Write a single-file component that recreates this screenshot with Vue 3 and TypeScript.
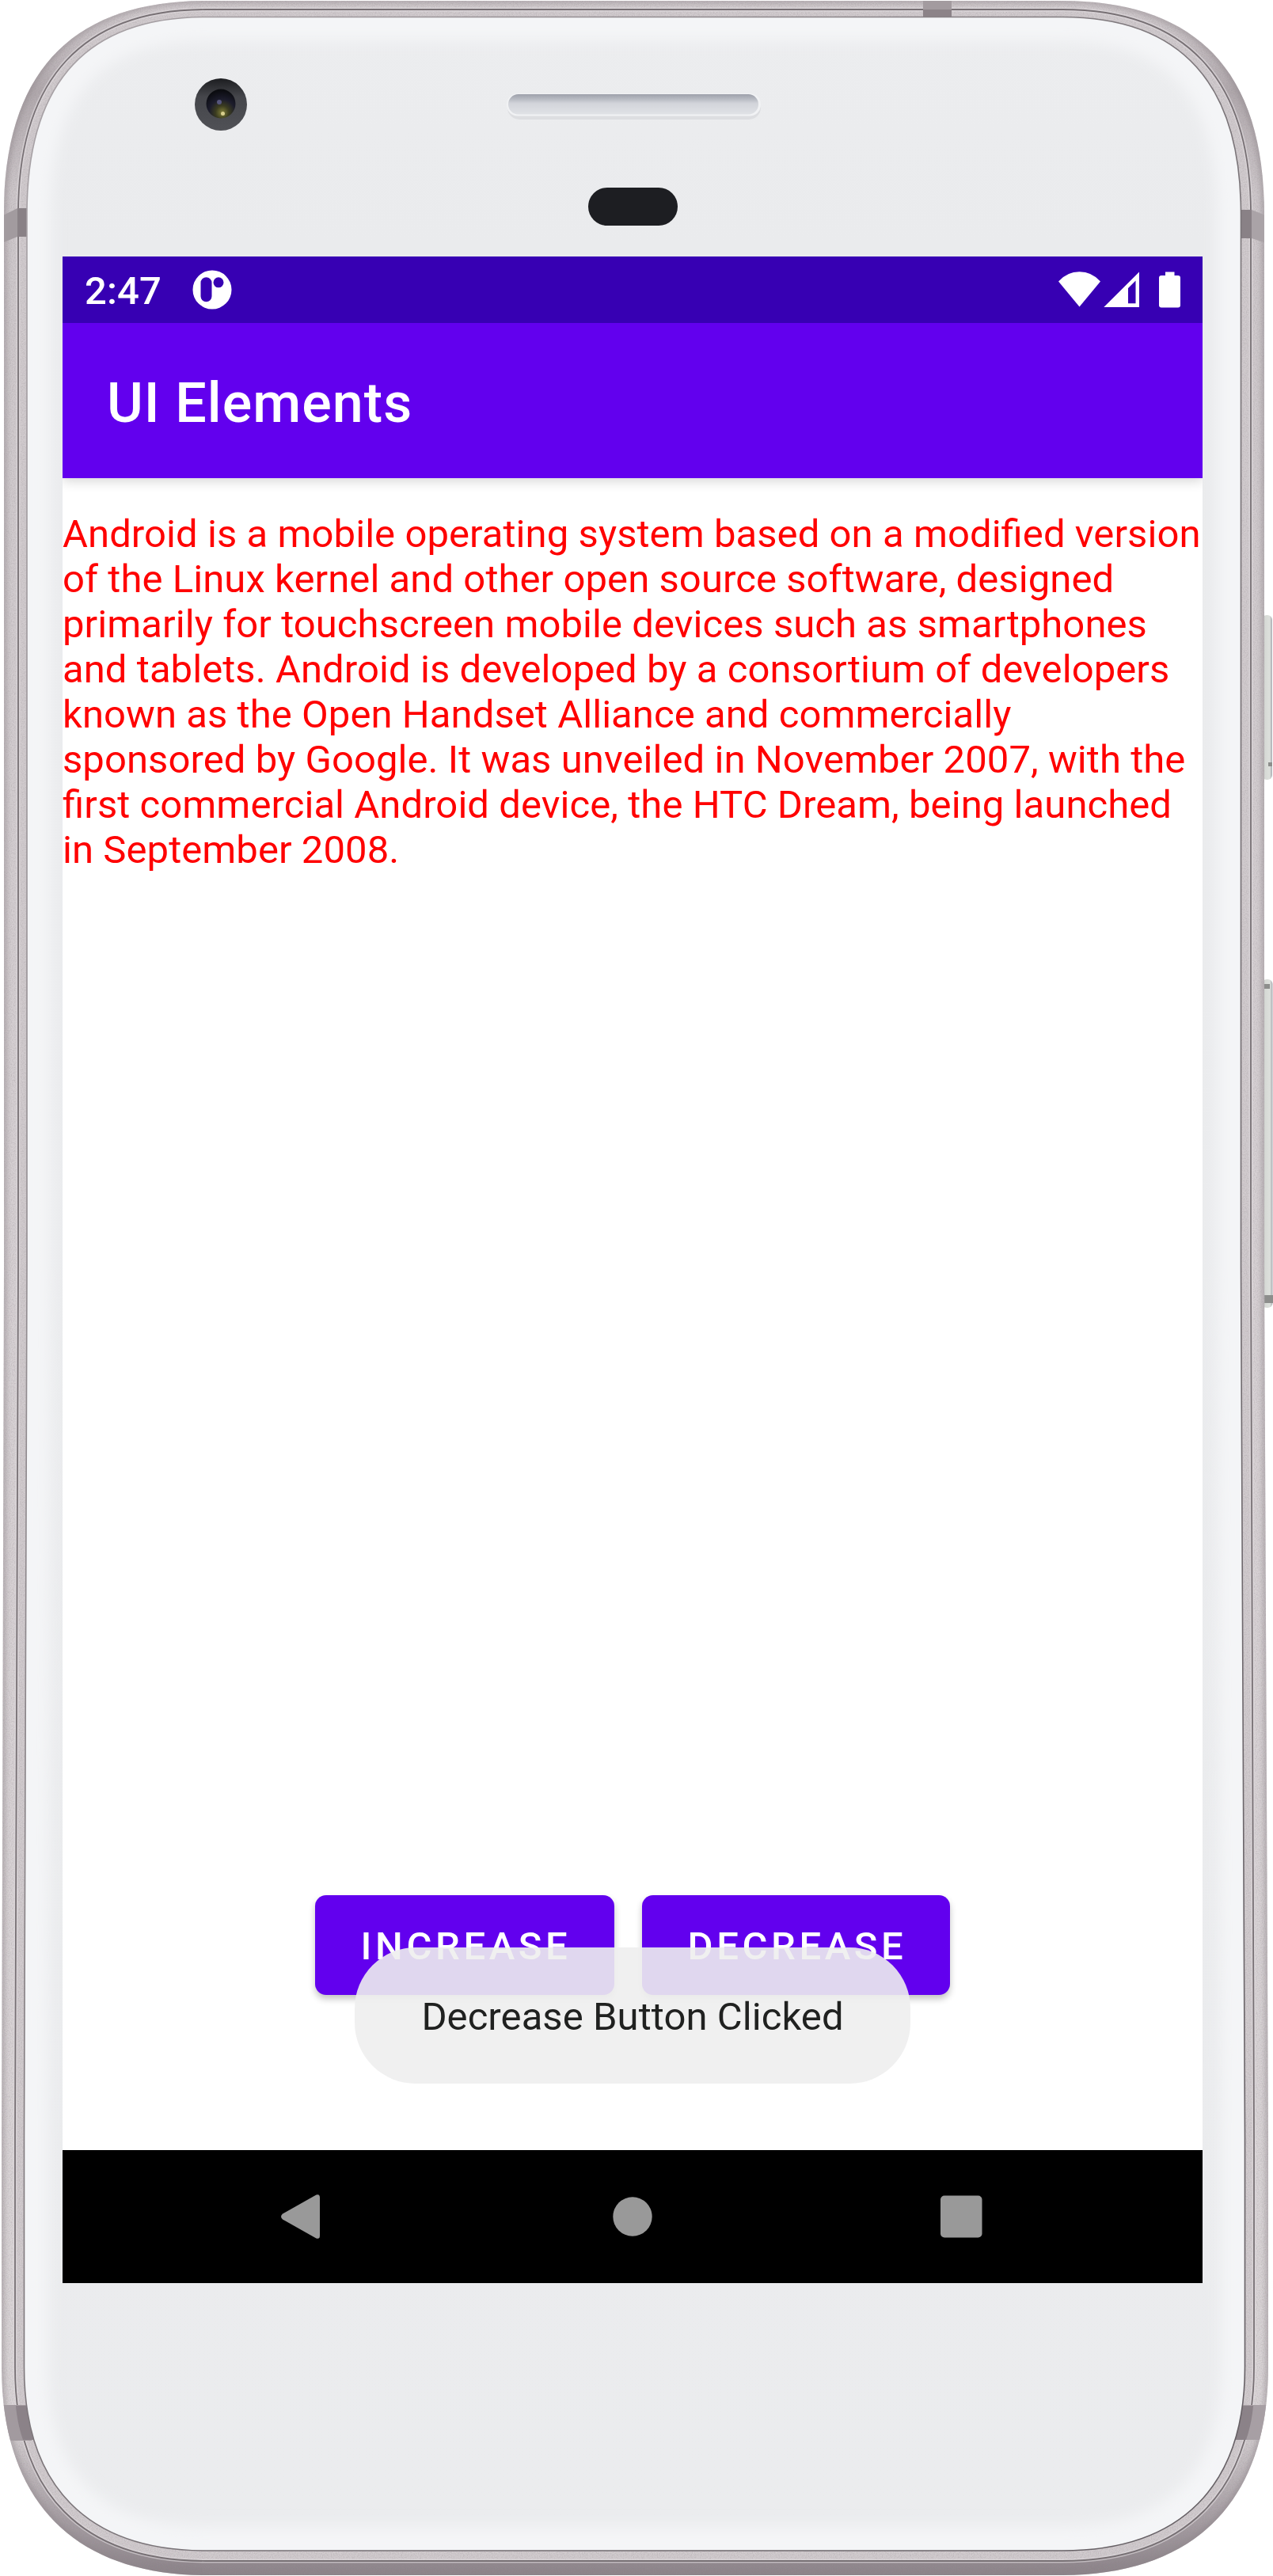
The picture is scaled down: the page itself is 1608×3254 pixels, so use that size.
<script setup lang="ts">
interface Action {
  label: string
  kind: string
}

const clock = '2:47'
const title = 'UI Elements'
const lines: string[] = [
  'Android is a mobile operating system based on a modified version',
  'of the Linux kernel and other open source software, designed',
  'primarily for touchscreen mobile devices such as smartphones',
  'and tablets. Android is developed by a consortium of developers',
  'known as the Open Handset Alliance and commercially',
  'sponsored by Google. It was unveiled in November 2007, with the',
  'first commercial Android device, the HTC Dream, being launched',
  'in September 2008.',
]
const actions: Action[] = [
  { label: 'INCREASE', kind: 'increase' },
  { label: 'DECREASE', kind: 'decrease' },
]
const toast = 'Decrease Button Clicked'

// Outlines of the metal rim, its seam and the glass face
const rim =
  'M5 270C5 84 98 1 260 1H1342C1505 1 1597 84 1597 270V1600L1602 2700V2990C1602 3160 1508 3253 1342 3253H260C95 3253 2 3160 2 2990V2700L5 1600Z'
const seam =
  'M23 270C23 98 106 12 260 12H1342C1496 12 1580 98 1580 270V1600L1584 2700V2990C1584 3150 1494 3235 1342 3235H260C104 3235 19 3150 19 2990V2700L23 1600Z'
const face =
  'M34 270C34 106 108 21.500 260 21.500H1342C1492 21.500 1567.500 106 1567.500 270V1600L1572.500 2700V2990C1572.500 3140 1492 3222 1342 3222H260C110 3222 30.500 3140 30.500 2990V2700L34 1600Z'
</script>

<template>
  <main class="phone">
    <svg class="body" viewBox="0 0 1608 3254" aria-hidden="true">
      <defs>
        <linearGradient id="metal" x1="0" y1="0" x2="0" y2="1">
          <stop offset="0" stop-color="#d6d0d3" />
          <stop offset="0.035" stop-color="#b1a9ad" />
          <stop offset="0.075" stop-color="#cec8cb" />
          <stop offset="0.5" stop-color="#d7d1d4" />
          <stop offset="0.94" stop-color="#dad5d7" />
          <stop offset="0.975" stop-color="#aaa2a7" />
          <stop offset="1" stop-color="#8b8288" />
        </linearGradient>
        <linearGradient id="glass" x1="0" y1="0" x2="0" y2="1">
          <stop offset="0" stop-color="#ecedef" />
          <stop offset="0.09" stop-color="#eaebed" />
          <stop offset="1" stop-color="#ebecee" />
        </linearGradient>
        <linearGradient id="faceEdge" x1="0" y1="0" x2="1" y2="1">
          <stop offset="0" stop-color="#a9a3a7" />
          <stop offset="0.5" stop-color="#7b7579" />
          <stop offset="1" stop-color="#655f64" />
        </linearGradient>
        <linearGradient id="mesh" x1="0" y1="0" x2="0" y2="1">
          <stop offset="0" stop-color="#9da0aa" />
          <stop offset="0.25" stop-color="#b8bbc3" />
          <stop offset="0.45" stop-color="#d2d4da" />
          <stop offset="1" stop-color="#e0e2e6" />
        </linearGradient>
        <linearGradient id="cameraRing" x1="0" y1="0" x2="0" y2="1">
          <stop offset="0" stop-color="#1c1d20" />
          <stop offset="0.35" stop-color="#45464b" />
          <stop offset="1" stop-color="#505156" />
        </linearGradient>
        <radialGradient id="lens" cx="0.55" cy="0.8" r="0.75">
          <stop offset="0" stop-color="#82803a" />
          <stop offset="0.3" stop-color="#3c3d20" />
          <stop offset="0.6" stop-color="#1c1c2c" />
          <stop offset="1" stop-color="#0b0c10" />
        </radialGradient>
        <linearGradient id="key" x1="0" y1="0" x2="1" y2="0">
          <stop offset="0" stop-color="#a9aaa8" />
          <stop offset="0.3" stop-color="#d6d9d5" />
          <stop offset="0.75" stop-color="#dde0dc" />
          <stop offset="1" stop-color="#a9acb2" />
        </linearGradient>
        <clipPath id="rimClip"><path :d="rim" /></clipPath>
        <clipPath id="faceClip"><path :d="face" /></clipPath>
        <filter id="soft" x="-5%" y="-5%" width="110%" height="110%">
          <feGaussianBlur stdDeviation="9" />
        </filter>
        <filter id="edge" x="-5%" y="-5%" width="110%" height="110%">
          <feGaussianBlur stdDeviation="3" />
        </filter>
        <filter id="grain" x="0" y="0" width="100%" height="100%">
          <feTurbulence type="fractalNoise" baseFrequency="0.7" numOctaves="2" seed="4" />
          <feColorMatrix values="0 0 0 0 0.3  0 0 0 0 0.27  0 0 0 0 0.29  1.6 0 0 0 -0.62" />
        </filter>
      </defs>

      <rect x="1594" y="777" width="13" height="208" rx="6" fill="url(#key)" />
      <rect x="1594" y="1237" width="13.500" height="415" rx="6" fill="url(#key)" />
      <path d="M1597 1243h7v6h-7zM1597 1636h11v10h-11zM1602 963h5v5h-5z" fill="#8d8e8c" />

      <path :d="rim" fill="url(#metal)" />
      <g clip-path="url(#rimClip)">
        <path :d="rim" class="rim-shade" filter="url(#edge)" />
        <path :d="seam" fill="#d1cbce" />
        <rect width="1608" height="3254" filter="url(#grain)" opacity="0.4" />
        <path :d="seam" class="seam-light" />
        <path :d="seam" class="seam" />
        <path d="M0 274L22 263H40V299H22L0 308Z" fill="#a29b9f" />
        <path d="M22 263h18v36h-18z" fill="#898186" />
        <path d="M1608 276L1581 265H1560V301H1581L1608 310Z" fill="#aaa3a7" />
        <path d="M1560 265h21v36h-21z" fill="#898186" />
        <path d="M0 3038H40V3083H0Z" fill="#a29a9f" />
        <path d="M20 3039H50V3082H29Q22 3062 20 3039Z" fill="#8b8288" />
        <path d="M1560 3038H1608V3082H1550Z" fill="#a79fa4" />
        <path d="M1583 3039H1555V3082H1574Q1581 3062 1583 3039Z" fill="#8b8288" />
        <path d="M1166 0h36v22h-36z" fill="#a39b9f" />
        <path d="M1166 12h36v10h-36z" fill="#8c8388" />
      </g>

      <path :d="face" fill="url(#glass)" />
      <g clip-path="url(#faceClip)">
        <path :d="face" class="face-glow" filter="url(#soft)" />
      </g>
      <path :d="face" class="face-line" />

      <circle cx="279" cy="132" r="33" fill="url(#cameraRing)" />
      <circle cx="279" cy="131" r="18.500" fill="url(#lens)" />
      <circle cx="277" cy="129" r="3" fill="#55557c" />
      <circle cx="281.500" cy="143.500" r="2.500" fill="#d8cf8e" />

      <rect x="641" y="121" width="320" height="30" rx="15" fill="#dddee1" />
      <rect x="640" y="118" width="321" height="28.500" rx="14" fill="#f1f2f4" />
      <rect x="642" y="119" width="316" height="25.500" rx="12.750" fill="url(#mesh)" />
      <rect x="743" y="237" width="113" height="48" rx="24" fill="#1d1e22" />
    </svg>

    <section class="screen">
      <header class="status">
        <div class="status-start">
          <span class="clock">{{ clock }}</span>
          <svg class="app-mark" viewBox="0 0 50 50">
            <path
              fill-rule="evenodd"
              d="M25 .500a24.500 24.500 0 1 0 0 49a24.500 24.500 0 1 0 0-49ZM17.500 9.300a7 7 0 0 1 7 7v17a7 7 0 0 1-14 0v-17a7 7 0 0 1 7-7ZM33 9.300a6.500 6.500 0 1 1 0 13a6.500 6.500 0 1 1 0-13Z"
            />
          </svg>
        </div>
        <svg class="indicators" viewBox="0 0 154 46">
          <path d="M0 12.500Q11 .300 26.500 .300Q42 .300 53 12.500L26.500 44.500Z" />
          <path fill-rule="evenodd" d="M57.300 45L102 .500V45ZM88 21V40.300H97.500V11.500Z" />
          <path
            d="M135 .500h11.500v4.500h4.500q3 0 3 3v34.500q0 3-3 3h-21q-3 0-3-3v-34.500q0-3 3-3h5z"
          />
        </svg>
      </header>

      <div class="app-bar">
        <h1>{{ title }}</h1>
      </div>

      <div class="content">
        <p class="copy">
          <span v-for="line in lines" :key="line" class="line">{{ line }}</span>
        </p>
        <div class="actions">
          <button v-for="a in actions" :key="a.kind" :class="['action', a.kind]" type="button">
            {{ a.label }}
          </button>
        </div>
        <div class="toast" role="status">{{ toast }}</div>
      </div>

      <nav class="nav">
        <svg viewBox="0 0 1440 168">
          <path
            d="M325 60V108Q325 113 320.500 111.500L278 87.500Q274 84 278 80.500L320.500 56.500Q325 55 325 60Z"
          />
          <circle cx="720" cy="84" r="24.700" />
          <rect x="1109" y="57.500" width="52.500" height="53" rx="5" />
        </svg>
      </nav>
    </section>
  </main>
</template>

<style>
html,
body {
  background: #fff;
  overflow: hidden;
}
</style>

<style scoped>
.phone {
  position: relative;
  box-sizing: border-box;
  width: 1608px;
  height: 3254px;
  padding: 324px 89px 0 79px;
  overflow: hidden;
  background: #fff;
  font-family: Roboto, 'Liberation Sans', sans-serif;
}
.body {
  position: absolute;
  inset: 0;
  width: 1608px;
  height: 3254px;
}
.rim-shade {
  fill: none;
  stroke: #8f868b;
  stroke-width: 7;
  opacity: 0.55;
}
.seam {
  fill: none;
  stroke: #777074;
  stroke-width: 1.8;
}
.seam-light {
  fill: none;
  stroke: #e0dbdd;
  stroke-width: 5;
  opacity: 0.6;
}
.face-glow {
  fill: none;
  stroke: #f4f5f7;
  stroke-width: 60;
}
.face-line {
  fill: none;
  stroke: url(#faceEdge);
  stroke-width: 1.6;
}
.screen {
  position: relative;
  display: flex;
  flex-direction: column;
  width: 1440px;
  height: 2560px;
  background: #fff;
}
.status {
  display: flex;
  justify-content: space-between;
  align-items: center;
  box-sizing: border-box;
  height: 84px;
  padding: 0 28px;
  background: #3700b3;
  color: #fff;
}
.status svg {
  display: block;
  fill: #fff;
}
.status-start {
  display: flex;
  align-items: center;
  gap: 39px;
}
.clock {
  font-size: 49px;
  font-weight: 500;
  line-height: 58px;
  margin-top: 4px;
  letter-spacing: 0.1px;
}
.app-mark {
  width: 50px;
  height: 50px;
}
.indicators {
  width: 154px;
  height: 46px;
}
.app-bar {
  display: flex;
  align-items: center;
  box-sizing: border-box;
  height: 196px;
  padding: 6px 0 0 56px;
  background: #6200ee;
  color: #fff;
  box-shadow: 0 4px 14px rgba(0, 0, 0, 0.16);
  clip-path: inset(0 0 -30px 0);
}
h1 {
  margin: 0;
  font-size: 70px;
  font-weight: 500;
  line-height: 82px;
  letter-spacing: 1.05px;
}
.content {
  position: relative;
  display: flex;
  flex: 1;
  flex-direction: column;
  justify-content: space-between;
  align-items: center;
  padding: 42px 0 196px;
}
.copy {
  width: 100%;
  margin: 0;
  color: #f00;
  font-size: 49px;
  line-height: 57px;
  letter-spacing: 0.07px;
  font-feature-settings: 'liga' 1;
  white-space: nowrap;
}
.line {
  display: block;
}
.actions {
  display: flex;
  gap: 35px;
}
.action {
  box-sizing: border-box;
  height: 126px;
  padding: 4px 0 0 3px;
  border: 0;
  border-radius: 14px;
  background: #6200ee;
  color: #fff;
  font: 500 49px/122px Roboto, 'Liberation Sans', sans-serif;
  letter-spacing: 4.6px;
  text-align: center;
  box-shadow: 0 5px 9px rgba(0, 0, 0, 0.24);
}
.increase {
  width: 378px;
}
.decrease {
  width: 389px;
}
.toast {
  position: absolute;
  left: 369px;
  bottom: 84px;
  width: 702px;
  height: 172px;
  border-radius: 77px;
  background: rgba(238, 238, 238, 0.9);
  color: #202120;
  font-size: 49px;
  line-height: 176px;
  letter-spacing: 0.07px;
  text-align: center;
}
.nav {
  height: 168px;
  background: #000;
}
.nav svg {
  display: block;
  width: 1440px;
  height: 168px;
  fill: #999;
}
</style>
